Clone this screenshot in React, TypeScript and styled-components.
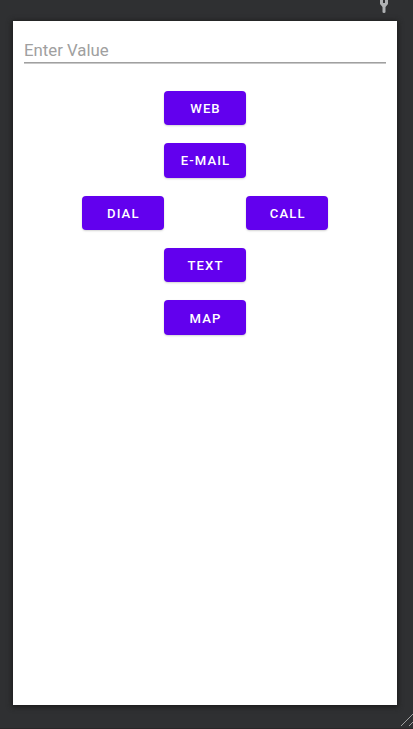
import React from 'react';
import styled, { createGlobalStyle } from 'styled-components';

const GlobalStyle = createGlobalStyle`
  * { box-sizing: border-box; }
  body { margin: 0; background: #2f3032; overflow: hidden; }
`;

const Workspace = styled.main`
  position: relative;
  width: 413px;
  height: 729px;
  padding: 21px 16px 24px 13px;
  background: #2f3032;
  border-bottom: 1px solid #292728;
  overflow: hidden;
  font-family: Roboto, sans-serif;
`;

const Wrench = styled.svg`
  position: absolute;
  top: 0;
  left: 379px;
`;

const ResizeGrip = styled.svg`
  position: absolute;
  right: 0;
  bottom: 0;
`;

const Screen = styled.section`
  height: 684px;
  padding: 10px 11px 0;
  background: #fff;
  box-shadow: 0 1px 5px 1px #1a1a1a;
`;

const Field = styled.label`
  display: block;
  width: 362px;
  height: 33px;
  border-bottom: 1px solid #c8c8c8;
`;

const ValueInput = styled.input`
  display: block;
  width: 100%;
  height: 32px;
  padding: 7px 0 0;
  border: 0;
  border-bottom: 1px solid #a0a0a0;
  outline: 0;
  background: transparent;
  color: #222;
  font: 400 16.8px/24px Roboto, sans-serif;
  &::placeholder { color: #a0a0a0; opacity: 1; }
`;

const Actions = styled.div`
  display: grid;
  grid-template-columns: repeat(3, 82.2px);
  grid-auto-rows: 34.4px;
  row-gap: 18px;
  justify-content: center;
  margin-top: 26.8px;
`;

const ActionButton = styled.button<{ $column?: number }>`
  grid-column: ${({ $column = 2 }) => $column};
  padding: 2px 0 0 1px;
  border: 0;
  border-radius: 4px;
  background: #6200ee;
  box-shadow: 0 1px 2px rgba(0, 0, 0, 0.18);
  color: #fff;
  font: 500 13.1px/18px Roboto, sans-serif;
  letter-spacing: 1.1px;
  text-align: center;
`;

export default function App() {
  return (
    <>
      <GlobalStyle />
      <Workspace>
        <Wrench width="10" height="14" viewBox="0 0 10 14">
          <path d="M1 0V4L3.5 7V12Q3.5 13 5 13T6.5 12V7L9 4V0H6V3H4V0Z" fill="#afb1b3" />
        </Wrench>
        <Screen>
          <Field>
            <ValueInput placeholder="Enter Value" aria-label="Enter Value" />
          </Field>
          <Actions>
            <ActionButton>WEB</ActionButton>
            <ActionButton>E-MAIL</ActionButton>
            <ActionButton $column={1}>DIAL</ActionButton>
            <ActionButton $column={3}>CALL</ActionButton>
            <ActionButton>TEXT</ActionButton>
            <ActionButton>MAP</ActionButton>
          </Actions>
        </Screen>
        <ResizeGrip width="13" height="15" viewBox="0 0 13 15">
          <path d="M1 13L13 1M9 13L13 9" stroke="#a0a0a0" strokeWidth="1" fill="none" />
        </ResizeGrip>
      </Workspace>
    </>
  );
}
